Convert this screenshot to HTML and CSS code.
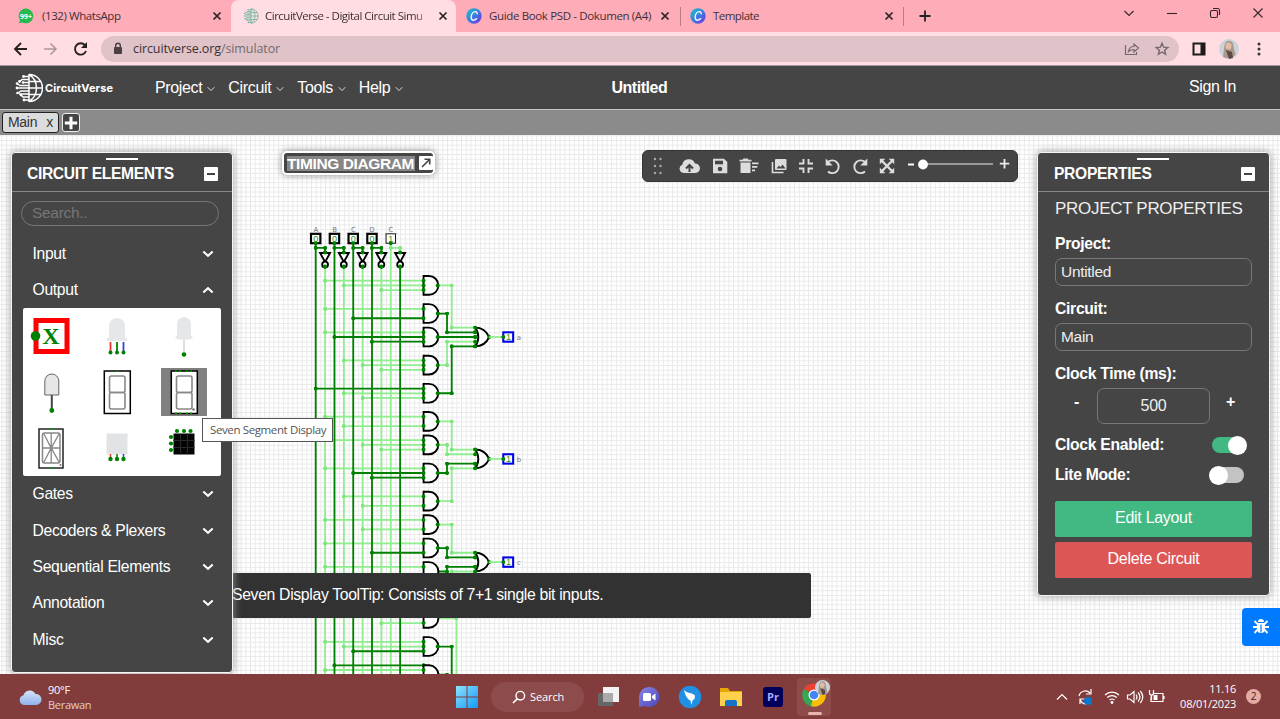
FILE: index.html
```html
<!DOCTYPE html>
<html lang="en">
<head>
<meta charset="utf-8">
<title>CircuitVerse - Digital Circuit Simulator</title>
<link rel="stylesheet" href="styles.css">
</head>
<body>
<svg class="defs" width="0" height="0" aria-hidden="true">
  <defs>
    <linearGradient id="canvaGrad" x1="0" y1="0" x2="1" y2="1"><stop offset="0" stop-color="#14c4cc"/><stop offset=".5" stop-color="#3a7fe0"/><stop offset="1" stop-color="#7d2ae8"/></linearGradient>
    <linearGradient id="winGrad" x1="0" y1="0" x2="1" y2="1"><stop offset="0" stop-color="#8be3ff"/><stop offset="1" stop-color="#1398f5"/></linearGradient>
    <linearGradient id="cloudGrad" x1="0" y1="0" x2="0" y2="1"><stop offset="0" stop-color="#d5e3fb"/><stop offset="1" stop-color="#8fb2ea"/></linearGradient>
    <linearGradient id="chatGrad" x1="0" y1="0" x2="1" y2="1"><stop offset="0" stop-color="#8a86e8"/><stop offset="1" stop-color="#4a45b8"/></linearGradient>
    <symbol id="x" viewBox="0 0 10 10"><path d="M1.500 1.500l7 7M8.500 1.500l-7 7" stroke="#2b2226" stroke-width="1.700"/></symbol>
    <symbol id="canva" viewBox="0 0 16 16"><circle cx="8" cy="8" r="7.700" fill="url(#canvaGrad)"/><path d="M10.800 6.300c.8-1.300.2-2.700-1.500-2.700-2.300 0-4.200 2.700-4.200 5.300 0 2 1 3.300 2.600 3.300 1.400 0 2.500-.9 3.200-2" fill="none" stroke="#fff" stroke-width="1.300"/></symbol>
    <symbol id="globe" viewBox="0 0 28 30"><g fill="none" stroke="currentColor" stroke-width="1.500"><path d="M14 1.500a13.300 13.300 0 0 1 0 27M14 1v28M14 1.500c10 6 10 21 0 27M14 8.500h11.500M14 15h13M14 21.500h11.500M14 3.500H9M14 6.500H7l-2 2M14 9.500H8M14 12.500H5l-3-2M14 15H3M14 18H6l-3 2M14 21H4M14 24H8l-2-2M14 27H9"/></g><g fill="currentColor"><circle cx="8.500" cy="3.500" r="1.400"/><circle cx="4.500" cy="8.500" r="1.400"/><circle cx="8" cy="9.500" r="1.200"/><circle cx="2" cy="10.500" r="1.300"/><circle cx="2" cy="15" r="1.400"/><circle cx="2.500" cy="20" r="1.300"/><circle cx="6" cy="22" r="1.300"/><circle cx="9" cy="27" r="1.400"/></g></symbol>
    <symbol id="down" viewBox="0 0 12 8"><path d="M1.300 1.500L6 5.800l4.700-4.300" fill="none" stroke="currentColor" stroke-width="2"/></symbol>
    <symbol id="thin" viewBox="0 0 8 6"><path d="M.7 1.200L4 4.600l3.300-3.400" fill="none" stroke="currentColor" stroke-width="1"/></symbol>
    <symbol id="avatar" viewBox="0 0 20 20"><circle cx="10" cy="10" r="10" fill="#cbd2da"/><path d="M4 18c1-6 1-12 2.500-14.500C8 1 13 1 14 4.500L15.500 12l1 4a10 10 0 0 1-12.500 2z" fill="#a9998c"/><ellipse cx="9.500" cy="7" rx="3" ry="3.600" fill="#e3bda5"/><path d="M7 11l6 2 1 6-4 1z" fill="#5b4944"/></symbol>
    <marker id="dotDark" viewBox="-1 -1 2 2" markerWidth=".86" markerHeight=".86" markerUnits="userSpaceOnUse"><circle r="1" fill="#008000"/></marker>
    <marker id="dotLight" viewBox="-1 -1 2 2" markerWidth=".86" markerHeight=".86" markerUnits="userSpaceOnUse"><circle r="1" fill="#80e680"/></marker>
    <g id="and"><path class="gate" d="M0-2h1.150a2 2 0 0 1 0 4H0z"/></g>
    <g id="or"><path class="gate" d="M0-2C1.400-2 2.400-1.300 3 0 2.400 1.300 1.400 2 0 2 .9.800.9-.8 0-2z"/><circle cx="3" r=".42" fill="#008000"/></g>
    <g id="not"><path class="gate" d="M-1.050-17.900h2.100L0-16z"/><circle class="gate" cy="-15.450" r=".62"/><circle cy="-15" r=".45" fill="#008000"/><circle cy="-18" r=".42" fill="#008000"/></g>
    <g id="out"><path class="wire light" d="M37 0h3"/><rect x="40" y="-1" width="2.100" height="2" fill="#fff" stroke="#0000e6" stroke-width=".44"/><circle cx="40" r=".42" fill="#008000"/></g>
    <pattern id="grid" width="4.690" height="4.690" patternUnits="userSpaceOnUse" x="1.470" y="4"><path d="M0 .5H4.690M.5 0V4.690" stroke="#e9e9e9" stroke-width="1"/></pattern>
  </defs>
</svg>

<div class="tabs">
  <div class="tab tab-wa"><svg width="16" height="16" viewBox="0 0 16 16"><path d="M8 .5a7.400 7.400 0 1 1-3.500 14L1 15l1-3A7.400 7.400 0 0 1 8 .5z" fill="#25b94d"/><text x="8" y="10.800" text-anchor="middle" class="badge99">99+</text></svg><span class="t1">(132) WhatsApp</span><svg class="close" width="10" height="10"><use href="#x"/></svg></div>
  <div class="tab tab-on"><svg class="favglobe" width="16" height="16"><use href="#globe"/></svg><span class="t2">CircuitVerse - Digital Circuit Simu</span><svg class="close" width="10" height="10"><use href="#x"/></svg></div>
  <div class="tab tab-guide"><svg width="16" height="16"><use href="#canva"/></svg><span class="t3">Guide Book PSD - Dokumen (A4)</span><svg class="close" width="10" height="10"><use href="#x"/></svg></div>
  <div class="tab tab-tpl"><svg width="16" height="16"><use href="#canva"/></svg><span class="t4">Template</span><svg class="close" width="10" height="10"><use href="#x"/></svg></div>
  <svg class="newtab" width="12" height="12" viewBox="0 0 12 12"><path d="M6 .5v11M.5 6h11" stroke="#222" stroke-width="1.800"/></svg>
  <div class="winctl">
    <svg width="12" height="12" viewBox="0 0 12 12"><path d="M1.500 4l4.500 4.500L10.500 4"/></svg>
    <svg width="12" height="12" viewBox="0 0 12 12"><path d="M1 6.500h10"/></svg>
    <svg width="12" height="12" viewBox="0 0 12 12"><rect x="1.500" y="3.500" width="7" height="7" rx="1.500"/><path d="M4 1.500h4.500a2 2 0 0 1 2 2V8"/></svg>
    <svg width="12" height="12" viewBox="0 0 12 12"><path d="M1.500 1.500l9 9M10.500 1.500l-9 9"/></svg>
  </div>
</div>

<div class="toolbar">
  <svg class="nav" width="80" height="20" viewBox="0 0 80 20"><g fill="none" stroke-width="1.900"><path stroke="#262022" d="M14 10H2M8 4l-6 6 6 6"/><path stroke="#a8969b" stroke-width="1.500" d="M31 10h12M37.500 4.500L43 10l-5.500 5.500"/><path stroke="#262022" d="M72 6.200A5.700 5.700 0 1 0 73 12"/></g><path d="M74 3v6h-6z" fill="#262022"/></svg>
  <div class="url">
    <svg width="10" height="13" viewBox="0 0 10 13"><path d="M2.700 6V3.500a2.300 2.300 0 0 1 4.600 0V6" fill="none" stroke="#4b4145" stroke-width="1.400"/><rect x="1" y="5" width="8" height="7" rx="1" fill="#4b4145"/></svg>
    <span class="addr">circuitverse.org<i>/simulator</i></span>
    <svg class="share" width="46" height="16" viewBox="0 0 46 16"><g fill="none" stroke="#75686c" stroke-width="1.200"><path d="M1.500 4v9.500h11V11M4.500 10.500c.5-3.500 2.500-5 5.500-5V3l4.500 4-4.500 4V8.500c-2.500 0-4 .5-5.500 2z"/><path stroke-width="1.400" d="M38 2.300l1.600 3.900 4.200.3-3.200 2.700 1 4.100L38 11l-3.600 2.300 1-4.100-3.200-2.700 4.200-.3z"/></g></svg>
  </div>
  <svg class="side" width="14" height="14" viewBox="0 0 14 14"><path d="M.5.500h13v13H.5zM2.500 2.500v9h6v-9z" fill="#1d1a1b" fill-rule="evenodd"/></svg>
  <svg class="me" width="20" height="20"><use href="#avatar"/></svg>
  <svg width="4" height="14" viewBox="0 0 4 14" fill="#333"><circle cx="2" cy="2" r="1.500"/><circle cx="2" cy="7" r="1.500"/><circle cx="2" cy="12" r="1.500"/></svg>
</div>

<header class="head">
  <div class="logo"><svg width="28" height="30"><use href="#globe"/></svg><b>CircuitVerse</b></div>
  <nav class="menu">
    <span>Project<svg width="8" height="6"><use href="#thin"/></svg></span><span>Circuit<svg width="8" height="6"><use href="#thin"/></svg></span><span>Tools<svg width="8" height="6"><use href="#thin"/></svg></span><span>Help<svg width="8" height="6"><use href="#thin"/></svg></span>
  </nav>
  <b class="name">Untitled</b>
  <span class="sign">Sign In</span>
</header>
<div class="circuits"><div class="ctab">Main<span>x</span></div><div class="cadd"><svg width="14" height="14" viewBox="0 0 14 14"><path d="M7 .8v12.400M.8 7h12.400" stroke="#fff" stroke-width="3"/></svg></div></div>

<main class="stage">
  <svg class="board" width="1280" height="539" viewBox="0 135 1280 539">
    <rect y="135" width="1280" height="539" fill="url(#grid)"/>
    <g transform="translate(315.700 337) scale(4.690)">
      <g class="wire light">
        <path class="plain" d="M2-15V73M6-15V73M10-15V73M14-15V73M16-20V73"/>
        <path d="M16-19h2v1"/>
        <path d="M2-12H23"/><path d="M6-11H23"/><path d="M14-10H23"/><path d="M2-6H23"/><path d="M2-1H23"/>
        <path d="M6 5H23"/><path d="M10 6H23"/><path d="M14 7H23"/><path d="M6 12H23"/><path d="M10 13H23"/>
        <path d="M2 17H23"/><path d="M6 19H23"/><path d="M2 22H23"/><path d="M10 23H23"/><path d="M14 24H23"/><path d="M2 28H23"/>
        <path d="M6 34H23"/><path d="M10 36H23"/><path d="M2 39H23"/><path d="M10 41H23"/><path d="M2 44H23"/><path d="M2 49H23"/>
        <path d="M14 61H23"/><path d="M2 65H23"/><path d="M6 66H23"/><path d="M2 71H23"/>
        <path d="M26-11H29V-2H34"/><path d="M26 6H28V1H34"/>
        <path d="M26 18H29V24H34"/><path d="M26 23H28V25H34"/><path d="M26 35H29V28H34"/>
        <path d="M26 40H29V46H34"/><path d="M34 50H29V56"/><path d="M26 60H30V74"/>
      </g>
      <g class="wire dark">
        <path class="plain" d="M0-20V73M4-20V73M8-20V73M12-20V73M18-15V73"/>
        <path d="M0-19h2v1"/><path d="M4-19h2v1"/><path d="M8-19h2v1"/><path d="M12-19h2v1"/>
        <path d="M8-4H23"/><path d="M4 0H23"/><path d="M12 1H23"/><path d="M0 11H23"/><path d="M8 29H23"/><path d="M12 30H23"/><path d="M12 46H23"/><path d="M8 67H23"/><path d="M4 70H23"/>
        <path d="M26-5H28V-1H34"/><path d="M26 0H34"/><path d="M26 12H29V2H34"/><path d="M26 29H28V27H34"/>
        <path d="M26 45H28V47H34"/><path d="M26 50H28V49H34"/><path d="M26 66H29V74"/><path d="M26 72H28V74"/>
      </g>
      <g>
        <use href="#and" x="23" y="-11"/><use href="#and" x="23" y="-5"/><use href="#and" x="23" y="0"/><use href="#and" x="23" y="6"/><use href="#and" x="23" y="12"/><use href="#and" x="23" y="18"/><use href="#and" x="23" y="23"/><use href="#and" x="23" y="29"/><use href="#and" x="23" y="35"/><use href="#and" x="23" y="40"/><use href="#and" x="23" y="45"/><use href="#and" x="23" y="50"/><use href="#and" x="23" y="60"/><use href="#and" x="23" y="66"/><use href="#and" x="23" y="72"/>
        <use href="#or" x="34" y="0"/><use href="#or" x="34" y="26"/><use href="#or" x="34" y="48"/>
        <use href="#not" x="2"/><use href="#not" x="6"/><use href="#not" x="10"/><use href="#not" x="14"/><use href="#not" x="18"/>
        <path class="pins" d="M23-12h0M23-11h0M23-10h0M23-6h0M23-4h0M23-1h0M23 0h0M23 1h0M23 5h0M23 6h0M23 7h0M23 11h0M23 12h0M23 13h0M23 17h0M23 19h0M23 22h0M23 23h0M23 24h0M23 28h0M23 29h0M23 30h0M23 34h0M23 36h0M23 39h0M23 41h0M23 44h0M23 46h0M23 49h0M23 61h0M23 65h0M23 66h0M23 67h0M23 71h0M26-11h0M26-5h0M26 0h0M26 6h0M26 12h0M26 18h0M26 23h0M26 29h0M26 35h0M26 40h0M26 45h0M26 66h0M34-2h0M34-1h0M34 0h0M34 1h0M34 2h0M34 24h0M34 25h0M34 27h0M34 28h0M34 46h0M34 47h0M34 49h0M34 50h0"/>
        <use href="#out"/><use href="#out" y="26"/><use href="#out" y="48"/>
        <g class="inbox"><rect x="-1" y="-22" width="2" height="2"/><rect x="3" y="-22" width="2" height="2"/><rect x="7" y="-22" width="2" height="2"/><rect x="11" y="-22" width="2" height="2"/><rect class="fine" x="15" y="-22" width="2" height="2"/></g>
        <path class="pins" d="M0-20h0M4-20h0M8-20h0M12-20h0M16-20h0"/>
      </g>
    </g>
    <g class="bits"><text x="315.700" y="242">0</text><text x="334.500" y="242">0</text><text x="353.200" y="242">0</text><text x="372" y="242">0</text><text x="390.700" y="242">1</text><text x="508.500" y="340">1</text><text x="508.500" y="462">1</text><text x="508.500" y="565">1</text></g>
    <g class="names"><text x="316" y="232">A</text><text x="334.700" y="232">B</text><text x="353.400" y="232">C</text><text x="372" y="232">D</text><text x="391" y="232">_C_</text><text x="519" y="340">a</text><text x="519" y="462">b</text><text x="519" y="565">c</text></g>
  </svg>

  <div class="timing"><b>TIMING DIAGRAM</b><svg width="14" height="14" viewBox="0 0 14 14"><rect width="14" height="14" rx="1" fill="#fff"/><path d="M3 11l7-7M5.500 3.300h5.200v5.200" fill="none" stroke="#444" stroke-width="1.600"/></svg></div>

  <div class="quick">
    <svg width="10" height="18" viewBox="0 0 10 18" fill="#aaa"><circle cx="2" cy="2" r="1.200"/><circle cx="7.500" cy="2" r="1.200"/><circle cx="2" cy="9" r="1.200"/><circle cx="7.500" cy="9" r="1.200"/><circle cx="2" cy="16" r="1.200"/><circle cx="7.500" cy="16" r="1.200"/></svg>
    <svg class="cloud" width="21" height="16" viewBox="0 0 21 16"><path d="M4.500 15A4.300 4.300 0 0 1 3.300 6.700 6.600 6.600 0 0 1 16 5.600 4.700 4.700 0 0 1 16.500 15z" fill="#ddd"/><path d="M10.500 14V8.500M7 10.500l3.500-3.500 3.500 3.500" fill="none" stroke="#454545" stroke-width="2"/></svg>
    <svg class="save" width="16" height="16" viewBox="0 0 16 16"><path d="M1 .8h11L15.300 4v11.200H1z" fill="#ddd"/><path d="M3 2.700h8v3.600H3z" fill="#454545"/><circle cx="8" cy="11" r="2.300" fill="#454545"/></svg>
    <svg class="trash" width="20" height="16" viewBox="0 0 20 16" fill="#ddd"><path d="M.5 1.800h3L4.500.500h4l1 1.300h3v1.700H.5zM1.500 4.500h10V15h-10zM13 4.500h6.500v1.700H13zM13 8h5.300v1.700H13zM13 11.500h3v1.700h-3z"/></svg>
    <svg class="pic" width="16" height="16" viewBox="0 0 16 16"><rect x="4" y="1" width="11.500" height="11" rx="1" fill="#ddd"/><path d="M1.500 4v10.500h11" fill="none" stroke="#ddd" stroke-width="1.600"/><path d="M5.500 10.500l2.500-3 1.500 1.800 2-2.800 3 4z" fill="#454545"/></svg>
    <svg class="fit" width="16" height="16" viewBox="0 0 16 16"><path d="M1 5.500h4.500V1M15 5.500h-4.500V1M1 10.500h4.500V15M15 10.500h-4.500V15" fill="none" stroke="#ddd" stroke-width="1.900"/></svg>
    <svg class="undo" width="16" height="17" viewBox="0 0 16 17"><path d="M2.500 4.500A6.400 6.400 0 1 1 3 13.500" fill="none" stroke="#ddd" stroke-width="1.900"/><path d="M.7.500v7h7z" fill="#ddd"/></svg>
    <svg class="redo" width="16" height="17" viewBox="0 0 16 17"><path d="M13.500 4.500A6.400 6.400 0 1 0 13 13.500" fill="none" stroke="#ddd" stroke-width="1.900"/><path d="M15.300.500v7h-7z" fill="#ddd"/></svg>
    <svg class="full" width="16" height="16" viewBox="0 0 16 16"><path d="M3 3l10 10M13 3L3 13" stroke="#ddd" stroke-width="2.400"/><path d="M.8.800h5.500L.8 6.300zM15.200.800v5.500L9.700.800zM.8 15.200V9.700l5.500 5.500zM15.200 15.200H9.700l5.500-5.500z" fill="#ddd"/></svg>
    <svg class="zoom" width="106" height="16" viewBox="0 0 106 16"><path d="M2 7.500h6" stroke="#fff" stroke-width="2"/><path d="M15 7h72" stroke="#eee" stroke-width="1.200"/><circle cx="17" cy="7.500" r="4.900" fill="#fff"/><path d="M98.500 2v9.500M93.800 6.700h9.500" stroke="#eee" stroke-width="1.800"/></svg>
  </div>

  <div class="message">Seven Display ToolTip: Consists of 7+1 single bit inputs.</div>

  <section class="panel left">
    <div class="ptitle"><b>CIRCUIT ELEMENTS</b><svg width="14" height="14" viewBox="0 0 14 14"><rect width="14" height="14" rx="1" fill="#fff"/><path d="M3 7h8" stroke="#444" stroke-width="2"/></svg></div>
    <div class="search">Search..</div>
    <div class="row">Input<svg width="12" height="8"><use href="#down"/></svg></div>
    <div class="row second">Output<svg class="up" width="12" height="8"><use href="#down"/></svg></div>
    <div class="parts">
      <svg width="48" height="48" viewBox="-24 -24 48 48"><rect x="-15" y="-15.500" width="31" height="31" fill="#fff" stroke="#f00" stroke-width="5"/><circle cx="-15.500" r="4.800" fill="#008000"/><text y="8" text-anchor="middle" class="bigx">X</text></svg>
      <svg width="48" height="48" viewBox="-24 -24 48 48"><path d="M-8-10a8 8 0 0 1 16 0V2h2v3h-20V2h2z" fill="#e6e7e9"/><path d="M-6.500 6v10" stroke="#e33" stroke-width="1.800"/><path d="M0 6v10" stroke="#008000" stroke-width="1.800"/><path d="M6.500 6v10" stroke="#34d" stroke-width="1.800"/><g fill="#008000"><circle cx="-6.500" cy="16.500" r="2"/><circle cy="16.500" r="2"/><circle cx="6.500" cy="16.500" r="2"/></g></svg>
      <svg width="48" height="48" viewBox="-24 -24 48 48"><path d="M-7-12a7 7 0 0 1 14 0V-1l2 3c-4 2.500-14 2.500-18 0l2-3z" fill="#e6e7e9"/><path d="M0 4v14" stroke="#ddd" stroke-width="2"/><circle cy="18.500" r="2.300" fill="#008000"/></svg>
      <svg width="48" height="48" viewBox="-24 -24 48 48"><path d="M-6.200-11a7 7 0 0 1 14 0V3h-14z" fill="#e6e6e6" stroke="#666" stroke-width="1"/><path d="M.8 3v14" stroke="#444" stroke-width="2"/><circle cx=".8" cy="18.500" r="2.400" fill="#008000"/></svg>
      <svg width="48" height="48" viewBox="-24 -24 48 48"><rect x="-12.700" y="-21" width="26" height="42.500" fill="#fff" stroke="#000" stroke-width="1.500"/><g fill="none" stroke="#888" stroke-width="1.600"><rect x="-7.500" y="-16" width="15.500" height="16.500" rx="2"/><rect x="-7.500" y=".5" width="15.500" height="16.500" rx="2"/></g><path d="M-1-20.500h2" stroke="#0a0"/></svg>
      <svg class="chosen" width="48" height="48" viewBox="-24 -24 48 48"><rect x="-12.700" y="-21" width="26" height="42.500" fill="#fff" stroke="#000" stroke-width="1.500"/><g fill="none" stroke="#888" stroke-width="1.600"><rect x="-7.500" y="-16" width="15.500" height="16.500" rx="2"/><rect x="-7.500" y=".5" width="15.500" height="16.500" rx="2"/></g><circle cx="9.500" cy="17.500" r="1.300" fill="#777"/><path d="M-9-20.800h18M-9 21.200h18" stroke="#090" stroke-width="1.400" stroke-dasharray="2 2 2 5"/></svg>
      <svg width="48" height="48" viewBox="-24 -24 48 48"><rect x="-12" y="-19" width="24" height="39" fill="#fff" stroke="#222" stroke-width="1.500"/><rect x="-8.500" y="-15" width="17.500" height="30" rx="2" fill="none" stroke="#888" stroke-width="1.500"/><path d="M.2-15v30M-8 0H9M-7-14L.2 0 8-14M-7 14L.2 0 8 14" fill="none" stroke="#888" stroke-width="1.300"/><circle cx="9.500" cy="17" r="1" fill="#777"/><path d="M-2-19h4M-2 20h4" stroke="#0a0"/></svg>
      <svg width="48" height="48" viewBox="-24 -24 48 48"><rect x="-10.500" y="-14.500" width="21" height="21" fill="#e2e3e5"/><path d="M-6.500 6v4" stroke="#e33" stroke-width="1.500"/><path d="M0 6v4" stroke="#008000" stroke-width="1.500"/><path d="M6.500 6v4" stroke="#34d" stroke-width="1.500"/><g fill="#008000"><circle cx="-6.500" cy="11" r="2.200"/><circle cy="11" r="2.200"/><circle cx="6.500" cy="11" r="2.200"/></g></svg>
      <svg width="48" height="48" viewBox="-24 -24 48 48"><rect x="-10.500" y="-14.500" width="21" height="21" fill="#050505"/><path d="M-3.500-14.500v21M3.500-14.500v21M-10.500-7.500h21M-10.500-.5h21" stroke="#292929"/><g fill="#008000"><circle cx="-7" cy="-17" r="2.100"/><circle cy="-17" r="2.100"/><circle cx="6.500" cy="-17" r="2.100"/><circle cx="-13" cy="-11" r="2.100"/><circle cx="-13" cy="-4.500" r="2.100"/><circle cx="-13" cy="2" r="2.100"/></g></svg>
    </div>
    <div class="row">Gates<svg width="12" height="8"><use href="#down"/></svg></div>
    <div class="row">Decoders &amp; Plexers<svg width="12" height="8"><use href="#down"/></svg></div>
    <div class="row">Sequential Elements<svg width="12" height="8"><use href="#down"/></svg></div>
    <div class="row">Annotation<svg width="12" height="8"><use href="#down"/></svg></div>
    <div class="row">Misc<svg width="12" height="8"><use href="#down"/></svg></div>
  </section>
  <div class="tip">Seven Segment Display</div>

  <section class="panel right">
    <div class="ptitle"><b>PROPERTIES</b><svg width="14" height="14" viewBox="0 0 14 14"><rect width="14" height="14" rx="1" fill="#fff"/><path d="M3 7h8" stroke="#444" stroke-width="2"/></svg></div>
    <div class="props">
      <div class="sub">PROJECT PROPERTIES</div>
      <b class="lab">Project:</b><div class="field">Untitled</div>
      <b class="lab">Circuit:</b><div class="field">Main</div>
      <b class="lab">Clock Time (ms):</b>
      <div class="clock"><b>-</b><div class="ms">500</div><b>+</b></div>
      <div class="sw"><b>Clock Enabled:</b><span class="toggle on"></span></div>
      <div class="sw lite"><b>Lite Mode:</b><span class="toggle"></span></div>
      <div class="btn edit">Edit Layout</div>
      <div class="btn del">Delete Circuit</div>
    </div>
  </section>

  <div class="bug"><svg width="16" height="16" viewBox="0 0 16 16"><path d="M5 4a3 3 0 0 1 6 0z" fill="#fff"/><path d="M4 5h8v6a4 4 0 0 1-8 0z" fill="#fff"/><path d="M1.500 3l3 3M14.500 3l-3 3M0 9h4M16 9h-4M1.500 15l3-3.300M14.500 15l-3-3.300" stroke="#fff" stroke-width="1.900"/><path d="M8 6.500v8" stroke="#007bff" stroke-width="1.200"/></svg></div>
</main>

<footer class="task">
  <svg class="weather" width="24" height="20" viewBox="0 0 24 20"><path d="M6 18a5 5 0 0 1-.5-9.800A6.500 6.500 0 0 1 17.500 7 5.500 5.500 0 0 1 18.500 18z" fill="url(#cloudGrad)"/></svg>
  <div class="wtext"><div>90°F</div><div class="dim">Berawan</div></div>
  <div class="apps">
    <svg width="22" height="22" viewBox="0 0 22 22" fill="url(#winGrad)"><path d="M0 0h10.500v10.500H0zM11.500 0H22v10.500H11.500zM0 11.500h10.500V22H0zM11.500 11.500H22V22H11.500z"/></svg>
    <div class="find"><svg width="14" height="14" viewBox="0 0 14 14"><circle cx="8.300" cy="5.700" r="4.300" fill="none" stroke="#fff" stroke-width="1.400"/><path d="M5.200 8.800L1 13" stroke="#fff" stroke-width="1.700"/></svg><span>Search</span></div>
    <svg class="a1" width="24" height="24" viewBox="0 0 24 24"><rect x="1" y="8" width="15" height="13" fill="#666"/><rect x="6" y="2" width="16" height="15" fill="#f3f3f3"/><rect x="6" y="8" width="10" height="9" fill="#aaa"/></svg>
    <svg class="a2" width="24" height="24" viewBox="0 0 24 24"><path d="M12 2a10 10 0 1 1-4 19l-6 1V12A10 10 0 0 1 12 2z" fill="url(#chatGrad)"/><rect x="6" y="8" width="8" height="8" rx="1.500" fill="#fff"/><path d="M15 11l3.500-2.500v7L15 13z" fill="#fff"/></svg>
    <svg class="a3" width="24" height="24" viewBox="0 0 24 24"><circle cx="12" cy="12" r="11.200" fill="#218fe4"/><path d="M6 5c3 3.500 8 2.500 11 5.500l-.5 3.500-2 1.500-1 4.500-1-4.500C9.500 14.500 7 10 6 5z" fill="#fff"/></svg>
    <svg class="a4" width="24" height="24" viewBox="0 0 24 24"><path d="M1 3h8l2 3h12v15H1z" fill="#e8a600"/><rect x="1" y="7" width="22" height="14" fill="#ffd04c"/><path d="M6 21v-4q0-2 2-2h8q2 0 2 2v4z" fill="#1475c8"/></svg>
    <svg class="a5" width="20" height="20" viewBox="0 0 20 20"><rect width="20" height="20" rx="3" fill="#00005b"/><text x="10" y="14" text-anchor="middle" class="pr">Pr</text></svg>
    <div class="chrome"><svg width="34" height="36" viewBox="0 0 34 36"><path d="M17 19L6.800 13.100a11.800 11.800 0 0 1 20.400 0z" fill="#ea4335"/><path d="M17 19L6.800 13.100A11.800 11.800 0 0 0 17 30.800z" fill="#34a853"/><path d="M17 19h11.800A11.800 11.800 0 0 1 17 30.800l-3-1z" fill="#fbbc05"/><path d="M17 19l10.200-5.900A11.800 11.800 0 0 1 28.800 19z" fill="#fbbc05"/><circle cx="17" cy="19" r="5.500" fill="#fff"/><circle cx="17" cy="19" r="4.300" fill="#4285f4"/><use href="#avatar" x="18" y="4" width="15" height="15"/></svg></div>
  </div>
  <svg class="tray" width="110" height="20" viewBox="0 0 110 20"><g fill="none" stroke="#fff" stroke-width="1.200"><path d="M2 12.500L7 7.500l5 5"/><path d="M24 9a6.500 6.500 0 0 1 11-3M36 2v5h-5M25 17v-5h4.500M25 12c1 3 3 5 6 5"/><path d="M50 8a10 10 0 0 1 14 0M52.200 10.500a7 7 0 0 1 9.600 0M54.500 13a4 4 0 0 1 5 0"/><path d="M72.500 8h2.500l4-3.500v11L75 12h-2.500zM81 7.500q2 2.500 0 5M83 5.500q4 4.500 0 9M85.300 4q5 6 0 12"/><path d="M98 6.500h10v8H96v-5M109 9v3"/><path d="M94.500 3v3a2 2 0 0 0 4 0V3M96.500 8v5"/></g><circle cx="57" cy="15.500" r="1.400" fill="#fff"/><circle cx="33" cy="14" r="4" fill="#0b78d0"/><path d="M98.500 8h4v5h-4z" fill="#fff"/></svg>
  <div class="date"><div>11.16</div><div>08/01/2023</div></div>
  <div class="notif">2</div>
</footer>
</body>
</html>
```
FILE: styles.css
```css
* { box-sizing: border-box; }
body { margin: 0; width: 1280px; height: 719px; overflow: hidden; display: flex; flex-direction: column; font-family: "Liberation Sans", Arial, sans-serif; font-size: 16px; }
svg { display: block; flex: none; }
.defs { position: absolute; }

.tabs { height: 32px; background: #ffacb9; display: flex; align-items: center; font: 11.5px "Open Sans", "Noto Sans", sans-serif; color: #3e3036; white-space: nowrap; }
.tab { height: 32px; display: flex; align-items: center; }
.tab span { flex: 1; margin-left: 8px; margin-top: -2px; }
.tab-wa { width: 231px; padding: 0 9px 0 18px; }
.t1 { letter-spacing: -.42px; }
.tab-on { width: 225px; padding: 0 10px 0 12px; background: #ffdde2; border-radius: 8px 8px 0 0; }
.tab-guide { width: 224px; padding: 0 10px 0 10px; }
.tab-tpl { width: 224px; padding: 0 9px; border-left: 1px solid #b97d87; border-right: 1px solid #b97d87; height: 19px; }
.t2 { letter-spacing: -.5px; -webkit-mask-image: linear-gradient(90deg, #000 90%, transparent); }
.tab .t2 { margin-left: 6px; flex: 0 0 166px; margin-right: 7px; }
.tab .t3 { letter-spacing: -.36px; margin-left: 7px; }
.tab .t4 { letter-spacing: -.55px; margin-left: 7px; }
.favglobe { color: #6db49d; }
.badge99 { font: bold 7px "Open Sans", sans-serif; fill: #fff; }
.newtab { margin-left: 15px; }
.winctl { margin-left: auto; margin-right: 16px; margin-bottom: 6px; display: flex; gap: 31px; }
.winctl svg { fill: none; stroke: #33262a; stroke-width: 1.1; }

.toolbar { height: 34px; background: #ffdde2; display: flex; align-items: center; padding-left: 13px; border-bottom: 1px solid #a79498; }
.url { width: 1078px; height: 26px; margin-left: 8px; border-radius: 13px; background: #dfc3c8; display: flex; align-items: center; padding: 0 9px 0 12px; }
.addr { font: 12.5px "Open Sans", sans-serif; color: #3b3034; margin-left: 10px; letter-spacing: -.1px; }
.addr i { font-style: normal; color: #77696e; }
.share { margin-left: auto; }
.side { margin-left: 13px; }
.me { margin: 0 18px 0 13px; }

.head { height: 44px; background: #454545; color: #fff; display: flex; align-items: center; border-bottom: 1px solid #c4c4c4; }
.logo { display: flex; align-items: center; margin-left: 15px; width: 140px; }
.logo b { font: 700 11px Inter, sans-serif; margin-left: 2px; letter-spacing: .1px; }
.menu { display: flex; letter-spacing: -.35px; }
.menu span { display: flex; align-items: center; gap: 5px; margin-right: 13px; }
.menu svg { margin-top: 3px; color: #ddd; }
.name { position: relative; margin-left: 195px; letter-spacing: -.45px; }
.sign { margin-left: auto; margin-right: 44px; margin-top: -1px; letter-spacing: -.4px; }
.circuits { height: 25px; background: #8b8b8b; display: flex; align-items: center; padding: 0 2px; gap: 4px; }
.ctab { width: 57px; height: 21px; border: 1px solid #222; border-radius: 3px; background: #dcdcdc; font-size: 14px; line-height: 19px; padding-left: 5px; color: #333; letter-spacing: -.3px; }
.ctab span { margin-left: 9px; }
.cadd { width: 18px; height: 19px; margin-left: -1px; border: 1px solid #eee; border-radius: 3px; background: #444; padding: 1.5px 1px; }

.stage { height: 539px; position: relative; overflow: hidden; background: #fff; }
.wire { fill: none; }
.wire.light { stroke: #90ee90; stroke-width: .38; }
.wire.dark { stroke: #008000; stroke-width: .39; }
.light path { marker: url(#dotLight); }
.dark path { marker: url(#dotDark); }
.wire .plain { marker: none; }
.gate { fill: #fff; stroke: #000; stroke-width: .4; }
.pins { fill: none; stroke: #008000; stroke-width: .85; stroke-linecap: round; }
.inbox rect { fill: #fff; stroke: #000; stroke-width: .46; }
.inbox .fine { stroke-width: .2; }
.bits { font: 9px "Liberation Sans", sans-serif; fill: #239523; text-anchor: middle; }
.names { font: 7px "DejaVu Sans", sans-serif; fill: #777; text-anchor: middle; }

.timing { position: absolute; left: 282px; top: 16px; width: 153px; height: 24px; border: 2px solid #fff; border-radius: 5px; background: #454545; box-shadow: 0 0 7px #888; display: flex; align-items: center; gap: 4px; padding-left: 3px; color: #fff; }
.timing b { background: #868686; font-size: 15.5px; line-height: 15px; width: 128px; white-space: nowrap; letter-spacing: -.4px; }
.quick { position: absolute; left: 642px; top: 15px; width: 376px; height: 32px; border-radius: 6px; background: #454545; display: flex; align-items: center; padding-left: 10px; border: 1px solid #353535; }
.cloud { margin-left: 16px; } .save { margin-left: 12px; } .trash { margin-left: 11px; } .pic { margin-left: 12px; }
.fit, .undo, .redo, .full { margin-left: 11px; }
.zoom { margin-left: 11px; margin-top: -2px; }

.panel { position: absolute; background: #454545; border: 1px solid #f5f5f5; border-radius: 4px; box-shadow: 0 0 8px #999; color: #fff; }
.left { left: 11px; top: 17px; width: 222px; height: 521px; }
.right { left: 1037px; top: 17px; width: 233px; height: 444px; }
.ptitle { height: 39px; border-bottom: 1px solid #888; display: flex; align-items: center; justify-content: space-between; padding: 3px 14px 0 15px; font-size: 15.6px; letter-spacing: -.3px; position: relative; }
.right .ptitle { padding-left: 16px; }
.ptitle::before { content: ""; position: absolute; width: 32px; height: 2px; background: #fff; top: 5px; left: 94px; }
.right .ptitle::before { left: 99px; }
.left .ptitle b { letter-spacing: -.35px; }
.search { margin: 9px 13px 10px 9px; height: 25px; border: 1px solid #777; border-radius: 13px; padding-left: 10px; line-height: 22px; color: #757575; font-size: 15.5px; letter-spacing: -.3px; }
.row { height: 36.3px; display: flex; align-items: center; justify-content: space-between; padding: 0 18px 0 20.5px; font-size: 15.7px; letter-spacing: -.32px; }
.second { height: 36px; }
.up { transform: rotate(180deg); }
.parts { margin: 0 11px 0 10.5px; height: 168px; background: #fff; border-radius: 2px; display: grid; grid-template-columns: repeat(3, 66.3px); grid-template-rows: repeat(3, 56px); align-items: center; justify-items: center; justify-content: center; }
.parts svg { margin-left: -9px; }
.parts .chosen { background: linear-gradient(#808080, #808080) 1px 0 / 46px 48px no-repeat; }
.bigx { font: bold 24px "Liberation Serif", serif; fill: #008000; }
.tip { position: absolute; left: 202px; top: 283px; width: 131px; height: 24px; border: 1px solid #555; background: #fff; color: #555; font: 11.5px/22px "Open Sans", sans-serif; padding-left: 7px; white-space: nowrap; letter-spacing: -.38px; }
.message { position: absolute; left: 232px; top: 438px; width: 579px; height: 45px; background: #323232; border-radius: 2px; color: #fff; line-height: 43px; font-size: 15.8px; letter-spacing: -.35px; white-space: nowrap; }
.props { padding: 8px 17px 0 17px; display: flex; flex-direction: column; letter-spacing: -.3px; }
.sub { font-size: 17px; line-height: 18px; color: #eee; white-space: nowrap; letter-spacing: -.3px; }
.lab { line-height: 18px; margin-top: 17px; font-size: 15.7px; }
.field { height: 28px; margin-top: 5px; border: 1px solid #777; border-radius: 7px; padding-left: 5px; line-height: 26px; font-size: 15.5px; color: #eee; }
.field + .lab { margin-top: 14px; }
.clock { display: flex; justify-content: space-between; margin-top: 5px; height: 36px; padding: 0 17px 0 19px; line-height: 27px; }
.ms { width: 113px; margin-left: 2px; border: 1px solid #777; border-radius: 7px; text-align: center; line-height: 34px; color: #eee; }
.sw { height: 30px; display: flex; align-items: center; justify-content: space-between; padding-right: 5px; margin-top: 6px; font-size: 15.7px; }
.sw.lite { margin-top: 0; padding-right: 6px; }
.toggle { width: 33px; height: 16px; margin-right: 2px; border-radius: 8px; background: #c3c3c3; display: flex; align-items: center; }
.toggle::before { content: ""; width: 19px; height: 19px; border-radius: 50%; background: #fff; margin-left: -2px; flex: none; }
.toggle.on { background: #42b983; }
.toggle.on::before { margin-left: 16px; }
.btn { height: 36px; text-align: center; line-height: 34px; border-radius: 2px; margin-top: 5px; }
.edit { background: #42b983; margin-top: 11px; }
.del { background: #dd5656; }
.bug { position: absolute; right: 0; top: 473px; width: 38px; height: 38px; background: #007bff; border-radius: 4px 0 0 4px; display: grid; place-items: center; padding-bottom: 3px; }

.task { height: 45px; background: #813c3b; display: flex; align-items: center; color: #fff; font: 11px "Open Sans", sans-serif; }
.weather { margin-left: 18px; }
.wtext { margin-left: 6px; width: 60px; line-height: 15px; letter-spacing: -.25px; }
.dim { color: #e2cfcf; letter-spacing: -.3px; }
.apps { display: flex; align-items: center; margin-left: 348px; }
.find { width: 93px; height: 30px; border-radius: 15px; background: #8d4c4b; margin-left: 13px; display: flex; align-items: center; gap: 4px; padding-left: 21px; letter-spacing: -.1px; }
.a1 { margin-left: 13px; } .a2 { margin-left: 16px; } .a3, .a4 { margin-left: 17px; } .a5 { margin-left: 20px; }
.pr { font: bold 11px "Open Sans", sans-serif; fill: #a9a9ff; }
.chrome { margin-left: 14px; width: 34px; height: 38px; background: #8d4b4a; border-radius: 4px; position: relative; }
.chrome svg { margin-top: -2px; }
.chrome::after { content: ""; position: absolute; left: 11px; bottom: 1px; width: 14px; height: 3px; border-radius: 2px; background: #e9b3ae; }
.tray { margin-left: auto; }
.date { width: 68px; margin-left: 3px; text-align: right; line-height: 15px; letter-spacing: -.25px; white-space: nowrap; margin-top: -1px; }
.notif { width: 15px; height: 15px; border-radius: 50%; background: #e5aaa3; color: #3b1b1b; text-align: center; line-height: 15px; margin: 0 19px 0 10px; font-size: 10px; }
```
